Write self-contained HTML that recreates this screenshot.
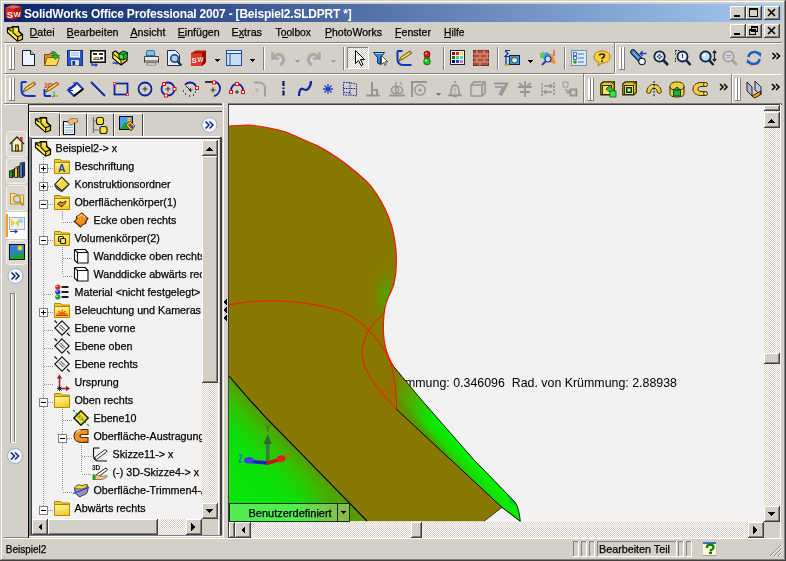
<!DOCTYPE html><html><head><meta charset="utf-8"><style>
html,body{margin:0;padding:0}
body{width:786px;height:561px;overflow:hidden;position:relative;background:#D4D0C8;font-family:"Liberation Sans",sans-serif}
svg text{font-family:"Liberation Sans",sans-serif}
svg{will-change:transform}
svg text[fill="#000"]{stroke:#000;stroke-width:0.25px}
</style></head><body>
<svg width="786" height="561" viewBox="0 0 786 561" shape-rendering="crispEdges" style="position:absolute;left:0;top:0">
<defs>
<pattern id="chk" width="2" height="2" patternUnits="userSpaceOnUse"><rect width="2" height="2" fill="#D4D0C8"/><rect width="1" height="1" fill="#fff"/><rect x="1" y="1" width="1" height="1" fill="#fff"/></pattern>
<linearGradient id="fg" x1="0" y1="0" x2="0.3" y2="1"><stop offset="0" stop-color="#FFF6A0"/><stop offset="1" stop-color="#F4CC30"/></linearGradient>
<linearGradient id="tb" x1="0" x2="1"><stop offset="0" stop-color="#0A246A"/><stop offset="1" stop-color="#A6CAF0"/></linearGradient>
<linearGradient id="gB" x1="0" y1="0" x2="1" y2="1"><stop offset="0" stop-color="#7CC000"/><stop offset="0.35" stop-color="#10D810"/><stop offset="1" stop-color="#20E020"/></linearGradient>
<linearGradient id="gC" gradientUnits="userSpaceOnUse" x1="395" y1="380" x2="520" y2="515"><stop offset="0" stop-color="#6A9A00"/><stop offset="0.25" stop-color="#20D020"/><stop offset="0.9" stop-color="#00E040"/><stop offset="1" stop-color="#10A070"/></linearGradient>
</defs>
<rect x="0" y="0" width="786" height="561" fill="#D4D0C8" />
<rect x="1" y="1" width="784" height="1" fill="#FFFFFF" />
<rect x="1" y="1" width="1" height="558" fill="#FFFFFF" />
<rect x="0" y="560" width="786" height="1" fill="#404040" />
<rect x="785" y="0" width="1" height="561" fill="#404040" />
<rect x="1" y="559" width="784" height="1" fill="#808080" />
<rect x="784" y="1" width="1" height="559" fill="#808080" />
<rect x="4" y="4" width="778" height="18" fill="url(#tb)" />
<g shape-rendering="auto"><path d="M5.5 7.5L12.5 5 21.5 6.5 14 9z" fill="#E86058"/><path d="M5.5 7.5L14 9 13.5 19.8 5.8 17.8z" fill="#E02418"/><path d="M14 9L21.5 6.5 21.2 16.8 13.5 19.8z" fill="#B01810"/></g>
<text x="6.8" y="17.5" font-size="9.5" fill="#fff" font-weight="bold" shape-rendering="auto">S</text>
<text x="13.6" y="17" font-size="8" fill="#F4E4E4" font-weight="bold" textLength="7.2" lengthAdjust="spacingAndGlyphs">W</text>
<text x="24" y="17.5" font-size="12" fill="#fff" font-weight="bold" letter-spacing="-0.2">SolidWorks Office Professional 2007 - [Beispiel2.SLDPRT *]</text>
<rect x="730" y="6" width="16" height="14" fill="#D4D0C8" />
<rect x="730" y="6" width="16" height="1" fill="#FFFFFF" />
<rect x="730" y="6" width="1" height="14" fill="#FFFFFF" />
<rect x="730" y="19" width="16" height="1" fill="#404040" />
<rect x="745" y="6" width="1" height="14" fill="#404040" />
<rect x="731" y="18" width="14" height="1" fill="#808080" />
<rect x="744" y="7" width="1" height="12" fill="#808080" />
<rect x="746" y="6" width="16" height="14" fill="#D4D0C8" />
<rect x="746" y="6" width="16" height="1" fill="#FFFFFF" />
<rect x="746" y="6" width="1" height="14" fill="#FFFFFF" />
<rect x="746" y="19" width="16" height="1" fill="#404040" />
<rect x="761" y="6" width="1" height="14" fill="#404040" />
<rect x="747" y="18" width="14" height="1" fill="#808080" />
<rect x="760" y="7" width="1" height="12" fill="#808080" />
<rect x="764" y="6" width="16" height="14" fill="#D4D0C8" />
<rect x="764" y="6" width="16" height="1" fill="#FFFFFF" />
<rect x="764" y="6" width="1" height="14" fill="#FFFFFF" />
<rect x="764" y="19" width="16" height="1" fill="#404040" />
<rect x="779" y="6" width="1" height="14" fill="#404040" />
<rect x="765" y="18" width="14" height="1" fill="#808080" />
<rect x="778" y="7" width="1" height="12" fill="#808080" />
<rect x="734" y="15" width="6" height="2" fill="#000" />
<path d="M749.5 8.5h8v8h-8z" fill="none" stroke="#000"/>
<rect x="749" y="8" width="9" height="2" fill="#000" />
<path d="M768 9l7 7M775 9l-7 7" stroke="#000" stroke-width="1.6" shape-rendering="auto"/>
<rect x="730" y="24" width="16" height="14" fill="#D4D0C8" />
<rect x="730" y="24" width="16" height="1" fill="#FFFFFF" />
<rect x="730" y="24" width="1" height="14" fill="#FFFFFF" />
<rect x="730" y="37" width="16" height="1" fill="#404040" />
<rect x="745" y="24" width="1" height="14" fill="#404040" />
<rect x="731" y="36" width="14" height="1" fill="#808080" />
<rect x="744" y="25" width="1" height="12" fill="#808080" />
<rect x="746" y="24" width="16" height="14" fill="#D4D0C8" />
<rect x="746" y="24" width="16" height="1" fill="#FFFFFF" />
<rect x="746" y="24" width="1" height="14" fill="#FFFFFF" />
<rect x="746" y="37" width="16" height="1" fill="#404040" />
<rect x="761" y="24" width="1" height="14" fill="#404040" />
<rect x="747" y="36" width="14" height="1" fill="#808080" />
<rect x="760" y="25" width="1" height="12" fill="#808080" />
<rect x="764" y="24" width="16" height="14" fill="#D4D0C8" />
<rect x="764" y="24" width="16" height="1" fill="#FFFFFF" />
<rect x="764" y="24" width="1" height="14" fill="#FFFFFF" />
<rect x="764" y="37" width="16" height="1" fill="#404040" />
<rect x="779" y="24" width="1" height="14" fill="#404040" />
<rect x="765" y="36" width="14" height="1" fill="#808080" />
<rect x="778" y="25" width="1" height="12" fill="#808080" />
<rect x="734" y="33" width="6" height="2" fill="#000" />
<path d="M751.5 26.5h6v5h-6z M749.5 29.5h6v5h-6z" fill="none" stroke="#000"/>
<rect x="751" y="26" width="7" height="2" fill="#000" />
<rect x="749" y="29" width="7" height="2" fill="#000" />
<path d="M768 27l7 7M775 27l-7 7" stroke="#000" stroke-width="1.6" shape-rendering="auto"/>
<text x="29.6" y="36" font-size="11" fill="#000" font-weight="normal" textLength="25" lengthAdjust="spacingAndGlyphs">Datei</text>
<rect x="30" y="37" width="8" height="1" fill="#000" />
<text x="66.6" y="36" font-size="11" fill="#000" font-weight="normal" textLength="52" lengthAdjust="spacingAndGlyphs">Bearbeiten</text>
<rect x="67" y="37" width="7" height="1" fill="#000" />
<text x="130.5" y="36" font-size="11" fill="#000" font-weight="normal" textLength="35" lengthAdjust="spacingAndGlyphs">Ansicht</text>
<rect x="130" y="37" width="7" height="1" fill="#000" />
<text x="177.7" y="36" font-size="11" fill="#000" font-weight="normal" textLength="42" lengthAdjust="spacingAndGlyphs">Einfügen</text>
<rect x="178" y="37" width="7" height="1" fill="#000" />
<text x="231.5" y="36" font-size="11" fill="#000" font-weight="normal" textLength="30.5" lengthAdjust="spacingAndGlyphs">Extras</text>
<rect x="239" y="37" width="5" height="1" fill="#000" />
<text x="275.5" y="36" font-size="11" fill="#000" font-weight="normal" textLength="35.5" lengthAdjust="spacingAndGlyphs">Toolbox</text>
<rect x="282" y="37" width="6" height="1" fill="#000" />
<text x="325" y="36" font-size="11" fill="#000" font-weight="normal" textLength="57" lengthAdjust="spacingAndGlyphs">PhotoWorks</text>
<rect x="325" y="37" width="7" height="1" fill="#000" />
<text x="395" y="36" font-size="11" fill="#000" font-weight="normal" textLength="36" lengthAdjust="spacingAndGlyphs">Fenster</text>
<rect x="395" y="37" width="6" height="1" fill="#000" />
<text x="444" y="36" font-size="11" fill="#000" font-weight="normal" textLength="20.5" lengthAdjust="spacingAndGlyphs">Hilfe</text>
<rect x="444" y="37" width="7" height="1" fill="#000" />
<rect x="4" y="42" width="778" height="1" fill="#808080" />
<rect x="4" y="43" width="778" height="1" fill="#FFFFFF" />
<rect x="4" y="73" width="610" height="1" fill="#808080" />
<rect x="4" y="74" width="778" height="1" fill="#FFFFFF" />
<rect x="614" y="43" width="1" height="30" fill="#808080" />
<rect x="615" y="43" width="1" height="30" fill="#FFFFFF" />
<rect x="583" y="74" width="1" height="29" fill="#808080" />
<rect x="584" y="74" width="1" height="29" fill="#FFFFFF" />
<rect x="731" y="74" width="1" height="29" fill="#808080" />
<rect x="732" y="74" width="1" height="29" fill="#FFFFFF" />
<rect x="9" y="47" width="2" height="23" fill="#FFFFFF" />
<rect x="11" y="47" width="1" height="23" fill="#808080" />
<rect x="9" y="69" width="3" height="1" fill="#808080" />
<rect x="12" y="47" width="2" height="23" fill="#FFFFFF" />
<rect x="14" y="47" width="1" height="23" fill="#808080" />
<rect x="12" y="69" width="3" height="1" fill="#808080" />
<rect x="9" y="78" width="2" height="23" fill="#FFFFFF" />
<rect x="11" y="78" width="1" height="23" fill="#808080" />
<rect x="9" y="100" width="3" height="1" fill="#808080" />
<rect x="12" y="78" width="2" height="23" fill="#FFFFFF" />
<rect x="14" y="78" width="1" height="23" fill="#808080" />
<rect x="12" y="100" width="3" height="1" fill="#808080" />
<rect x="619" y="47" width="2" height="23" fill="#FFFFFF" />
<rect x="621" y="47" width="1" height="23" fill="#808080" />
<rect x="619" y="69" width="3" height="1" fill="#808080" />
<rect x="622" y="47" width="2" height="23" fill="#FFFFFF" />
<rect x="624" y="47" width="1" height="23" fill="#808080" />
<rect x="622" y="69" width="3" height="1" fill="#808080" />
<rect x="588" y="78" width="2" height="23" fill="#FFFFFF" />
<rect x="590" y="78" width="1" height="23" fill="#808080" />
<rect x="588" y="100" width="3" height="1" fill="#808080" />
<rect x="591" y="78" width="2" height="23" fill="#FFFFFF" />
<rect x="593" y="78" width="1" height="23" fill="#808080" />
<rect x="591" y="100" width="3" height="1" fill="#808080" />
<rect x="735" y="78" width="2" height="23" fill="#FFFFFF" />
<rect x="737" y="78" width="1" height="23" fill="#808080" />
<rect x="735" y="100" width="3" height="1" fill="#808080" />
<rect x="738" y="78" width="2" height="23" fill="#FFFFFF" />
<rect x="740" y="78" width="1" height="23" fill="#808080" />
<rect x="738" y="100" width="3" height="1" fill="#808080" />
<rect x="5" y="44" width="1" height="29" fill="#FFFFFF" />
<rect x="5" y="75" width="1" height="28" fill="#FFFFFF" />
<rect x="4" y="103" width="23" height="435" fill="#D4D0C8" />
<rect x="4" y="103" width="778" height="1" fill="#808080" />
<rect x="4" y="104" width="24" height="1" fill="#FFFFFF" />
<rect x="28" y="104" width="194" height="1" fill="#404040" />
<rect x="228" y="104" width="554" height="1" fill="#404040" />
<rect x="28" y="104" width="1" height="434" fill="#000" />
<rect x="29" y="137" width="2" height="399" fill="#808080" />
<rect x="31" y="138" width="1" height="397" fill="#404040" />
<rect x="29" y="106" width="193" height="1" fill="#FFFFFF" />
<rect x="28" y="111" width="194" height="1" fill="#404040" />
<rect x="30" y="112" width="192" height="25" fill="#D4D0C8" />
<rect x="29" y="136" width="191" height="1" fill="#FFFFFF" />
<rect x="31" y="138" width="189" height="1" fill="#404040" />
<rect x="32" y="139" width="170" height="380" fill="#F2F2F2" />
<rect x="202" y="139" width="16" height="380" fill="url(#chk)" />
<rect x="202" y="140" width="16" height="16" fill="#D4D0C8" />
<rect x="202" y="140" width="16" height="1" fill="#FFFFFF" />
<rect x="202" y="140" width="1" height="16" fill="#FFFFFF" />
<rect x="202" y="155" width="16" height="1" fill="#404040" />
<rect x="217" y="140" width="1" height="16" fill="#404040" />
<rect x="203" y="154" width="14" height="1" fill="#808080" />
<rect x="216" y="141" width="1" height="14" fill="#808080" />
<rect x="202" y="156" width="16" height="227" fill="#D4D0C8" />
<rect x="202" y="156" width="16" height="1" fill="#FFFFFF" />
<rect x="202" y="156" width="1" height="227" fill="#FFFFFF" />
<rect x="202" y="382" width="16" height="1" fill="#404040" />
<rect x="217" y="156" width="1" height="227" fill="#404040" />
<rect x="203" y="381" width="14" height="1" fill="#808080" />
<rect x="216" y="157" width="1" height="225" fill="#808080" />
<rect x="202" y="503" width="16" height="16" fill="#D4D0C8" />
<rect x="202" y="503" width="16" height="1" fill="#FFFFFF" />
<rect x="202" y="503" width="1" height="16" fill="#FFFFFF" />
<rect x="202" y="518" width="16" height="1" fill="#404040" />
<rect x="217" y="503" width="1" height="16" fill="#404040" />
<rect x="203" y="517" width="14" height="1" fill="#808080" />
<rect x="216" y="504" width="1" height="14" fill="#808080" />
<path d="M205 151h8l-4-4z" fill="#000"/>
<path d="M205 509h8l-4 4z" fill="#000"/>
<rect x="32" y="519" width="170" height="16" fill="url(#chk)" />
<rect x="32" y="519" width="16" height="16" fill="#D4D0C8" />
<rect x="32" y="519" width="16" height="1" fill="#FFFFFF" />
<rect x="32" y="519" width="1" height="16" fill="#FFFFFF" />
<rect x="32" y="534" width="16" height="1" fill="#404040" />
<rect x="47" y="519" width="1" height="16" fill="#404040" />
<rect x="33" y="533" width="14" height="1" fill="#808080" />
<rect x="46" y="520" width="1" height="14" fill="#808080" />
<rect x="48" y="519" width="110" height="16" fill="#D4D0C8" />
<rect x="48" y="519" width="110" height="1" fill="#FFFFFF" />
<rect x="48" y="519" width="1" height="16" fill="#FFFFFF" />
<rect x="48" y="534" width="110" height="1" fill="#404040" />
<rect x="157" y="519" width="1" height="16" fill="#404040" />
<rect x="49" y="533" width="108" height="1" fill="#808080" />
<rect x="156" y="520" width="1" height="14" fill="#808080" />
<rect x="186" y="519" width="16" height="16" fill="#D4D0C8" />
<rect x="186" y="519" width="16" height="1" fill="#FFFFFF" />
<rect x="186" y="519" width="1" height="16" fill="#FFFFFF" />
<rect x="186" y="534" width="16" height="1" fill="#404040" />
<rect x="201" y="519" width="1" height="16" fill="#404040" />
<rect x="187" y="533" width="14" height="1" fill="#808080" />
<rect x="200" y="520" width="1" height="14" fill="#808080" />
<path d="M42 523v8l-4-4z" fill="#000"/><path d="M191 523v8l4-4z" fill="#000"/>
<rect x="202" y="519" width="16" height="16" fill="#D4D0C8" />
<rect x="218" y="139" width="1" height="397" fill="#FFFFFF" />
<rect x="220" y="137" width="2" height="400" fill="#404040" />
<rect x="29" y="535" width="193" height="1" fill="#808080" />
<rect x="29" y="536" width="193" height="1" fill="#FFFFFF" />
<rect x="222" y="103" width="6" height="435" fill="#D4D0C8" />
<rect x="223" y="103" width="1" height="435" fill="#FFFFFF" />
<path d="M227 299v6l-4-3z M227 307v6l-4-3z M227 315v6l-4-3z" fill="#000"/>
<rect x="228" y="104" width="1" height="434" fill="#404040" />
<rect x="229" y="105" width="535" height="417" fill="#F2F2F2" />
<g shape-rendering="auto">
<text x="385.7" y="387" font-size="12.4" textLength="291.3" lengthAdjust="spacingAndGlyphs" fill="#000000" font-family="Liberation Sans">Krümmung: 0.346096&#160; Rad. von Krümmung: 2.88938</text>
<path d="M229 126 L248 125 C262 126 275 129 286 132 L318 146 C330 152 338 158 346 164 C356 172 364 178 371 186 C380 198 385 207 389 218 C393 228 395 240 396 250 C397 262 396 275 394 284 C392 290 390 294 388 298 C385 305 384 312 383.6 320 C383 332 384 342 386 349 C388 356 390 361 393.6 366.4 L421.6 400 L473.5 459.4 L483.9 470 L514.9 502 C518 506 519.5 514 520.3 521.3 L502 507.4 L484 521.3 L229 521 Z" fill="#887700"/>
<defs><radialGradient id="gd" gradientUnits="userSpaceOnUse" cx="386" cy="296" r="30" gradientTransform="translate(386 296) scale(0.6 1.4) translate(-386 -296)"><stop offset="0" stop-color="#40B000" stop-opacity="0.9"/><stop offset="1" stop-color="#877A00" stop-opacity="0"/></radialGradient><radialGradient id="gl" gradientUnits="userSpaceOnUse" cx="390" cy="390" r="22"><stop offset="0" stop-color="#D04000" stop-opacity="0.3"/><stop offset="1" stop-color="#877A00" stop-opacity="0"/></radialGradient><linearGradient id="gB2" gradientUnits="userSpaceOnUse" x1="298" y1="448" x2="256" y2="488"><stop offset="0" stop-color="#5A9800"/><stop offset="0.3" stop-color="#30C400"/><stop offset="0.6" stop-color="#10DC08"/><stop offset="1" stop-color="#08E408"/></linearGradient><radialGradient id="gB3" gradientUnits="userSpaceOnUse" cx="350" cy="521" r="55"><stop offset="0" stop-color="#609400" stop-opacity="0.95"/><stop offset="0.5" stop-color="#50A000" stop-opacity="0.6"/><stop offset="1" stop-color="#40B000" stop-opacity="0"/></radialGradient><clipPath id="cd"><path d="M229 126 L248 125 C262 126 275 129 286 132 L318 146 C330 152 338 158 346 164 C356 172 364 178 371 186 C380 198 385 207 389 218 C393 228 395 240 396 250 C397 262 396 275 394 284 C392 290 390 294 388 298 C385 305 384 312 383.6 320 C383 332 384 342 386 349 C388 356 390 361 393.6 366.4 L421.6 400 L473.5 459.4 L483.9 470 L514.9 502 C518 506 519.5 514 520.3 521.3 L502 507.4 L484 521.3 L229 521 Z"/></clipPath></defs>
<path d="M360 250 L400 250 L400 330 L360 330Z" fill="url(#gd)" clip-path="url(#cd)"/>
<path d="M360 350 L400 350 L400 415 L360 415Z" fill="url(#gl)" clip-path="url(#cd)"/>
<path d="M229 376 L249.3 399.6 L268.2 420 L300 452.4 L367 521 L229 521 Z" fill="url(#gB2)"/>
<path d="M229 376 L249.3 399.6 L268.2 420 L300 452.4 L367 521 L229 521 Z" fill="url(#gB3)"/>
<defs><clipPath id="cs"><path d="M393.6 366.4 L421.6 400 L473.5 459.4 L483.9 470 L514.9 502 C518 506 519.5 514 520.3 521.3 L502 507.4 L395.7 408.5 C395.5 395 394.5 380 393.6 366.4Z"/></clipPath><linearGradient id="gS1" gradientUnits="userSpaceOnUse" x1="448.9" y1="460" x2="461" y2="449.2"><stop offset="0" stop-color="#4CA000"/><stop offset="0.45" stop-color="#18DC00"/><stop offset="1" stop-color="#08F000"/></linearGradient><linearGradient id="gS2" gradientUnits="userSpaceOnUse" x1="398" y1="375" x2="432" y2="420"><stop offset="0" stop-color="#887700" stop-opacity="0.95"/><stop offset="1" stop-color="#887700" stop-opacity="0"/></linearGradient><radialGradient id="gS3" gradientUnits="userSpaceOnUse" cx="518" cy="497" r="11"><stop offset="0" stop-color="#0050A0" stop-opacity="0.8"/><stop offset="1" stop-color="#0050A0" stop-opacity="0"/></radialGradient></defs>
<path d="M393.6 366.4 L421.6 400 L473.5 459.4 L483.9 470 L514.9 502 C518 506 519.5 514 520.3 521.3 L502 507.4 L395.7 408.5 C395.5 395 394.5 380 393.6 366.4Z" fill="url(#gS1)"/>
<path d="M393.6 366.4 L421.6 400 L473.5 459.4 L483.9 470 L514.9 502 C518 506 519.5 514 520.3 521.3 L502 507.4 L395.7 408.5 C395.5 395 394.5 380 393.6 366.4Z" fill="url(#gS2)"/>
<rect x="495" y="485" width="30" height="37" fill="url(#gS3)" clip-path="url(#cs)"/>
<path d="M229 376 L249.3 399.6 L268.2 420 L300 452.4 L367 521" stroke="#000" stroke-width="1.1" fill="none"/>
<path d="M395.7 408.5 L502 507.4 L520.3 521.3" stroke="#000" stroke-width="1" fill="none"/>
<path d="M393.6 366.4 L421.6 400 L473.5 459.4 L483.9 470 L514.9 502 C518 506 519.5 514 520.3 521.3" stroke="#101010" stroke-width="0.9" fill="none"/>
<path d="M502 507.4 L484 521.3" stroke="#302000" stroke-width="0.8" fill="none"/>
<path d="M229 126 L248 125 C262 126 275 129 286 132 L318 146 C330 152 338 158 346 164 C356 172 364 178 371 186 C380 198 385 207 389 218 C393 228 395 240 396 250 C397 262 396 275 394 284 C392 290 390 294 388 298 C385 305 384 312 383.6 320 C383 332 384 342 386 349 C388 356 390 361 393.6 366.4" stroke="#FF1000" stroke-width="1.1" fill="none"/>
<path d="M229 305 C250 300 300 297 343 312 C362 320 378 338 388 356 C394 370 397 392 396.5 409" stroke="#FF1000" stroke-width="1" fill="none"/>
<path d="M384.6 312.8 C372 324 363 335 362 352 C362 372 382 394 396.5 409" stroke="#FF1000" stroke-width="1" fill="none"/>
</g>
<g shape-rendering="auto">
<path d="M267.7 462 V443" stroke="#3A7A3A" stroke-width="3.6"/><path d="M263.5 444 L267.7 434.5 L272 444Z" fill="#2E6A2E"/>
<path d="M267.7 463 L251 461.5" stroke="#2020C0" stroke-width="3.6" stroke-linecap="round"/><ellipse cx="249" cy="460.3" rx="5" ry="3.3" fill="#4040F0"/>
<path d="M267.7 463 L278 460" stroke="#C01818" stroke-width="3.6" stroke-linecap="round"/><ellipse cx="281" cy="458.6" rx="4.5" ry="3.5" fill="#E02020" transform="rotate(-15 281 458.6)"/>
<path d="M265 424.5l2.7 3.5 2.7-3.5M267.7 428v4" stroke="#2E6A2E" stroke-width="0.9" fill="none"/>
<path d="M239 455h3l-3 7h3" stroke="#2050F0" stroke-width="1" fill="none"/>
<path d="M286 453l4 6M290 453l-4 6" stroke="#E05020" stroke-width="0.9" fill="none"/>
</g>
<rect x="229.5" y="503.5" width="108" height="18" fill="#fff" fill-opacity="0.3" stroke="#103010"/>
<rect x="337.5" y="503.5" width="12" height="18" fill="#fff" fill-opacity="0.3" stroke="#103010"/>
<text x="248.5" y="517" font-size="11" fill="#000" font-weight="normal" >Benutzerdefiniert</text>
<path d="M341 511h5l-2.5 3z" fill="#000"/>
<rect x="229" y="522" width="535" height="16" fill="url(#chk)" />
<rect x="229" y="522" width="6" height="16" fill="#D4D0C8" />
<rect x="229" y="522" width="6" height="1" fill="#FFFFFF" />
<rect x="229" y="522" width="1" height="16" fill="#FFFFFF" />
<rect x="229" y="537" width="6" height="1" fill="#404040" />
<rect x="234" y="522" width="1" height="16" fill="#404040" />
<rect x="230" y="536" width="4" height="1" fill="#808080" />
<rect x="233" y="523" width="1" height="14" fill="#808080" />
<rect x="235" y="522" width="16" height="16" fill="#D4D0C8" />
<rect x="235" y="522" width="16" height="1" fill="#FFFFFF" />
<rect x="235" y="522" width="1" height="16" fill="#FFFFFF" />
<rect x="235" y="537" width="16" height="1" fill="#404040" />
<rect x="250" y="522" width="1" height="16" fill="#404040" />
<rect x="236" y="536" width="14" height="1" fill="#808080" />
<rect x="249" y="523" width="1" height="14" fill="#808080" />
<rect x="411" y="522" width="11" height="16" fill="#D4D0C8" />
<rect x="411" y="522" width="11" height="1" fill="#FFFFFF" />
<rect x="411" y="522" width="1" height="16" fill="#FFFFFF" />
<rect x="411" y="537" width="11" height="1" fill="#404040" />
<rect x="421" y="522" width="1" height="16" fill="#404040" />
<rect x="412" y="536" width="9" height="1" fill="#808080" />
<rect x="420" y="523" width="1" height="14" fill="#808080" />
<rect x="748" y="522" width="16" height="16" fill="#D4D0C8" />
<rect x="748" y="522" width="16" height="1" fill="#FFFFFF" />
<rect x="748" y="522" width="1" height="16" fill="#FFFFFF" />
<rect x="748" y="537" width="16" height="1" fill="#404040" />
<rect x="763" y="522" width="1" height="16" fill="#404040" />
<rect x="749" y="536" width="14" height="1" fill="#808080" />
<rect x="762" y="523" width="1" height="14" fill="#808080" />
<path d="M245 526v8l-4-4z" fill="#000"/><path d="M753 526v8l4-4z" fill="#000"/>
<rect x="764" y="105" width="16" height="417" fill="url(#chk)" />
<rect x="764" y="105" width="16" height="6" fill="#D4D0C8" />
<rect x="764" y="105" width="16" height="1" fill="#FFFFFF" />
<rect x="764" y="105" width="1" height="6" fill="#FFFFFF" />
<rect x="764" y="110" width="16" height="1" fill="#404040" />
<rect x="779" y="105" width="1" height="6" fill="#404040" />
<rect x="765" y="109" width="14" height="1" fill="#808080" />
<rect x="778" y="106" width="1" height="4" fill="#808080" />
<rect x="764" y="112" width="16" height="16" fill="#D4D0C8" />
<rect x="764" y="112" width="16" height="1" fill="#FFFFFF" />
<rect x="764" y="112" width="1" height="16" fill="#FFFFFF" />
<rect x="764" y="127" width="16" height="1" fill="#404040" />
<rect x="779" y="112" width="1" height="16" fill="#404040" />
<rect x="765" y="126" width="14" height="1" fill="#808080" />
<rect x="778" y="113" width="1" height="14" fill="#808080" />
<rect x="764" y="353" width="16" height="11" fill="#D4D0C8" />
<rect x="764" y="353" width="16" height="1" fill="#FFFFFF" />
<rect x="764" y="353" width="1" height="11" fill="#FFFFFF" />
<rect x="764" y="363" width="16" height="1" fill="#404040" />
<rect x="779" y="353" width="1" height="11" fill="#404040" />
<rect x="765" y="362" width="14" height="1" fill="#808080" />
<rect x="778" y="354" width="1" height="9" fill="#808080" />
<rect x="764" y="506" width="16" height="16" fill="#D4D0C8" />
<rect x="764" y="506" width="16" height="1" fill="#FFFFFF" />
<rect x="764" y="506" width="1" height="16" fill="#FFFFFF" />
<rect x="764" y="521" width="16" height="1" fill="#404040" />
<rect x="779" y="506" width="1" height="16" fill="#404040" />
<rect x="765" y="520" width="14" height="1" fill="#808080" />
<rect x="778" y="507" width="1" height="14" fill="#808080" />
<path d="M767 123h8l-4-4z" fill="#000"/><path d="M767 512h8l-4 4z" fill="#000"/>
<rect x="764" y="522" width="16" height="16" fill="#D4D0C8" />
<rect x="780" y="104" width="1" height="434" fill="#FFFFFF" />
<rect x="4" y="537" width="24" height="1" fill="#808080" />
<rect x="4" y="538" width="778" height="1" fill="#FFFFFF" />
<text x="5.8" y="553" font-size="11" fill="#000" font-weight="normal" textLength="40.5" lengthAdjust="spacingAndGlyphs">Beispiel2</text>
<rect x="573" y="541" width="6" height="1" fill="#808080" />
<rect x="573" y="541" width="1" height="16" fill="#808080" />
<rect x="573" y="556" width="6" height="1" fill="#FFFFFF" />
<rect x="578" y="541" width="1" height="16" fill="#FFFFFF" />
<rect x="581" y="541" width="6" height="1" fill="#808080" />
<rect x="581" y="541" width="1" height="16" fill="#808080" />
<rect x="581" y="556" width="6" height="1" fill="#FFFFFF" />
<rect x="586" y="541" width="1" height="16" fill="#FFFFFF" />
<rect x="589" y="541" width="6" height="1" fill="#808080" />
<rect x="589" y="541" width="1" height="16" fill="#808080" />
<rect x="589" y="556" width="6" height="1" fill="#FFFFFF" />
<rect x="594" y="541" width="1" height="16" fill="#FFFFFF" />
<rect x="678" y="541" width="6" height="1" fill="#808080" />
<rect x="678" y="541" width="1" height="16" fill="#808080" />
<rect x="678" y="556" width="6" height="1" fill="#FFFFFF" />
<rect x="683" y="541" width="1" height="16" fill="#FFFFFF" />
<rect x="686" y="541" width="6" height="1" fill="#808080" />
<rect x="686" y="541" width="1" height="16" fill="#808080" />
<rect x="686" y="556" width="6" height="1" fill="#FFFFFF" />
<rect x="691" y="541" width="1" height="16" fill="#FFFFFF" />
<rect x="597" y="541" width="80" height="1" fill="#808080" />
<rect x="597" y="541" width="1" height="16" fill="#808080" />
<rect x="597" y="556" width="80" height="1" fill="#FFFFFF" />
<rect x="676" y="541" width="1" height="16" fill="#FFFFFF" />
<text x="599" y="553" font-size="11" fill="#000" font-weight="normal" textLength="71" lengthAdjust="spacingAndGlyphs">Bearbeiten Teil</text>
<rect x="703" y="544" width="13" height="12" fill="#FAFCD8" />
<rect x="703" y="542" width="13" height="2" fill="#4070B0" />
<rect x="716" y="543" width="1" height="13" fill="#C8C8C0" />
<rect x="703" y="555" width="14" height="1" fill="#A0A098" />
<path d="M706.8 548c0-2.2 1.6-3.3 3.4-3.3s3.4 1 3.4 2.8c0 1.8-2.2 2.2-2.9 3v1" stroke="#088008" stroke-width="2.2" fill="none" shape-rendering="auto"/>
<rect x="709" y="552" width="2.6" height="2" fill="#088008" />
<path d="M770 556l11-11M774 556l7-7M778 556l3-3" stroke="#808080" stroke-width="1" shape-rendering="auto"/>
<path d="M771 556l11-11M775 556l7-7M779 556l3-3" stroke="#fff" stroke-width="1" shape-rendering="auto"/>
<rect x="6.5" y="131.5" width="20" height="25" rx="3" fill="#DCD9D2" stroke="#F4F2EE" shape-rendering="auto"/>
<rect x="6.5" y="158.5" width="20" height="25" rx="3" fill="#DCD9D2" stroke="#F4F2EE" shape-rendering="auto"/>
<rect x="6.5" y="185.5" width="20" height="25" rx="3" fill="#DCD9D2" stroke="#F4F2EE" shape-rendering="auto"/>
<rect x="6" y="212" width="21" height="27" fill="#FFFFFF" />
<rect x="6" y="214" width="2" height="23" fill="#F0A028" />
<rect x="6.5" y="240.5" width="20" height="24" rx="3" fill="#DCD9D2" stroke="#F4F2EE" shape-rendering="auto"/>
<g shape-rendering="auto"><circle cx="15.5" cy="276" r="7.5" fill="#F0F4FF" stroke="#A0A8D0"/><path d="M11.5 272.5l3.5 3.5-3.5 3.5M15.5 272.5l3.5 3.5-3.5 3.5" stroke="#10287A" stroke-width="1.5" fill="none"/></g>
<g shape-rendering="auto"><circle cx="15" cy="456" r="7.5" fill="#F0F4FF" stroke="#A0A8D0"/><path d="M11 452.5l3.5 3.5-3.5 3.5M15 452.5l3.5 3.5-3.5 3.5" stroke="#10287A" stroke-width="1.5" fill="none"/></g>
<g shape-rendering="auto"><circle cx="209.5" cy="125" r="7.5" fill="#F0F4FF" stroke="#A0A8D0"/><path d="M205.5 121.5l3.5 3.5-3.5 3.5M209.5 121.5l3.5 3.5-3.5 3.5" stroke="#10287A" stroke-width="1.5" fill="none"/></g>
<rect x="10" y="293" width="1" height="150" fill="#808080" />
<rect x="11" y="293" width="1" height="150" fill="#FFFFFF" />
<rect x="14" y="293" width="1" height="150" fill="#808080" />
<rect x="15" y="293" width="1" height="150" fill="#FFFFFF" />
<rect x="10" y="293" width="5" height="1" fill="#808080" />
<rect x="11" y="442" width="5" height="1" fill="#FFFFFF" />
<svg x="30" y="139" width="172" height="379" overflow="hidden">
<g transform="translate(-30,-139)">
<path d="M43.5 157V508" stroke="#909090" stroke-dasharray="1 1" stroke-width="1"/>
<path d="M62.5 211V220M62.5 247V274M62.5 409V490M81.5 445V472" stroke="#909090" stroke-dasharray="1 1" stroke-width="1"/>
<text x="55.5" y="152" font-size="11" fill="#000" font-weight="normal" textLength="61.7" lengthAdjust="spacingAndGlyphs">Beispiel2-&gt; x</text>
<g transform="translate(35,140)" shape-rendering="auto"><path d="M0.6 3L4.7 2.6 5.7 1.6 11.4 1.7 11.8 6.4 15.5 9.6 15.3 14.4 10.5 16 0.6 7.4Z" fill="#F0D820" stroke="#000" stroke-width="1.4" stroke-linejoin="round"/><path d="M1.2 4.2L10.2 11.8V15.2L1.2 7z" fill="#FFF040"/><path d="M6.4 3h4.6v4.2l-4.4-1.2z" fill="#F8E848"/><path d="M11 12.2l3.8-2.2v4l-3.8 1.6z" fill="#E8C818"/><path d="M0.8 3.4L4.4 6.2M6 2.2V7.6M6 7.6L10.6 11.8M10.6 11.8L15.2 9.8M10.6 11.8V15.8" stroke="#000" stroke-width="1.1" fill="none"/></g>
<text x="74.5" y="170" font-size="11" fill="#000" font-weight="normal" textLength="59.7" lengthAdjust="spacingAndGlyphs">Beschriftung</text>
<path d="M44 168.5H54" stroke="#909090" stroke-dasharray="1 1" stroke-width="1"/>
<rect x="39.5" y="164.5" width="8" height="8" fill="#fff" stroke="#808080"/>
<rect x="41" y="168" width="5" height="1" fill="#000" />
<rect x="43" y="166" width="1" height="5" fill="#000" />
<g transform="translate(54,158)" shape-rendering="auto"><path d="M0.5 1.5h6l1.5 1.5h7.5v12.5h-15z" fill="#F0C830" stroke="#B08800"/><path d="M0.5 4.5h15v11h-15z" fill="url(#fg)" stroke="#B08800"/><text x="4.3" y="14" font-size="10" font-weight="bold" font-family="Liberation Serif" fill="#2040A0">A</text></g>
<text x="74.5" y="188" font-size="11" fill="#000" font-weight="normal" textLength="96.0" lengthAdjust="spacingAndGlyphs">Konstruktionsordner</text>
<path d="M44 186.5H54" stroke="#909090" stroke-dasharray="1 1" stroke-width="1"/>
<rect x="39.5" y="182.5" width="8" height="8" fill="#fff" stroke="#808080"/>
<rect x="41" y="186" width="5" height="1" fill="#000" />
<rect x="43" y="184" width="1" height="5" fill="#000" />
<g transform="translate(54,176)" shape-rendering="auto"><path d="M0.8 9.5l2 3.5 5 2.8 7.4-7.3-1.5-1z" fill="#707880" stroke="#202830" stroke-width="0.9"/><path d="M0.8 8.3L7.8 1.2 15 8.3 7.8 14.6z" fill="#F8D848" stroke="#302800" stroke-width="1.1" stroke-linejoin="round"/><path d="M3 8.3l4.8-4.8" stroke="#FFF4A0" stroke-width="1.2"/></g>
<text x="74.5" y="206" font-size="11" fill="#000" font-weight="normal" textLength="102.0" lengthAdjust="spacingAndGlyphs">Oberflächenkörper(1)</text>
<path d="M44 204.5H54" stroke="#909090" stroke-dasharray="1 1" stroke-width="1"/>
<rect x="39.5" y="200.5" width="8" height="8" fill="#fff" stroke="#808080"/>
<rect x="41" y="204" width="5" height="1" fill="#000" />
<g transform="translate(54,194)" shape-rendering="auto"><path d="M0.5 1.5h6l1.5 1.5h7.5v12.5h-15z" fill="#F0C830" stroke="#B08800"/><path d="M0.5 4.5h15v11h-15z" fill="url(#fg)" stroke="#B08800"/><path d="M3.5 10l3-2.5v1.3c2 0 4-.8 5.5-1.8-.3 2-1.5 4-4 4.5v1.5z" fill="#F08818" stroke="#402000" stroke-width="0.9" stroke-linejoin="round"/></g>
<text x="93.5" y="224" font-size="11" fill="#000" font-weight="normal" textLength="82.9" lengthAdjust="spacingAndGlyphs">Ecke oben rechts</text>
<path d="M63 222.5H73" stroke="#909090" stroke-dasharray="1 1" stroke-width="1"/>
<g transform="translate(73,212)" shape-rendering="auto"><path d="M1 9.5c2-1 3-3 2.5-5 2-.5 4-2 5-3.5 2 1 4 4 6.5 5.5-1.5 1.2-2.5 3-2.3 5-2 .3-4 1.5-5.2 3.5-2-2-4-4-6.5-5.5z" fill="#F09020" stroke="#402000" stroke-width="1.1" stroke-linejoin="round"/><path d="M4.5 5c1.5-.5 3-1.5 4-2.5 1.5 1 2.5 2 4 3" stroke="#FFD070" stroke-width="1.3" fill="none"/></g>
<text x="74.5" y="242" font-size="11" fill="#000" font-weight="normal" textLength="85.3" lengthAdjust="spacingAndGlyphs">Volumenkörper(2)</text>
<path d="M44 240.5H54" stroke="#909090" stroke-dasharray="1 1" stroke-width="1"/>
<rect x="39.5" y="236.5" width="8" height="8" fill="#fff" stroke="#808080"/>
<rect x="41" y="240" width="5" height="1" fill="#000" />
<g transform="translate(54,230)" shape-rendering="auto"><path d="M0.5 1.5h6l1.5 1.5h7.5v12.5h-15z" fill="#F0C830" stroke="#B08800"/><path d="M0.5 4.5h15v11h-15z" fill="url(#fg)" stroke="#B08800"/><rect x="4.5" y="6.5" width="5" height="5" rx="1" fill="none" stroke="#202000" stroke-width="1.1"/><rect x="6.5" y="8.5" width="5" height="5" rx="1" fill="#F8E070" stroke="#202000" stroke-width="1.1"/></g>
<text x="93.5" y="260" font-size="11" fill="#000" font-weight="normal" textLength="111.8" lengthAdjust="spacingAndGlyphs">Wanddicke oben rechts</text>
<path d="M63 258.5H73" stroke="#909090" stroke-dasharray="1 1" stroke-width="1"/>
<g transform="translate(73,248)" shape-rendering="auto"><path d="M1.5 1.5h10.5l3 3v10.5h-10.5l-3-3z" fill="#fff" stroke="#101010" stroke-width="1.1" stroke-linejoin="round"/><path d="M4.5 4.5h10.5M4.5 4.5v10.5M1.5 1.5l3 3" stroke="#101010" stroke-width="1.1" fill="none"/></g>
<text x="93.5" y="278" font-size="11" fill="#000" font-weight="normal" textLength="125.4" lengthAdjust="spacingAndGlyphs">Wanddicke abwärts rechts</text>
<path d="M63 276.5H73" stroke="#909090" stroke-dasharray="1 1" stroke-width="1"/>
<g transform="translate(73,266)" shape-rendering="auto"><path d="M1.5 1.5h10.5l3 3v10.5h-10.5l-3-3z" fill="#fff" stroke="#101010" stroke-width="1.1" stroke-linejoin="round"/><path d="M4.5 4.5h10.5M4.5 4.5v10.5M1.5 1.5l3 3" stroke="#101010" stroke-width="1.1" fill="none"/></g>
<text x="74.5" y="296" font-size="11" fill="#000" font-weight="normal" textLength="125.9" lengthAdjust="spacingAndGlyphs">Material &lt;nicht festgelegt&gt;</text>
<path d="M44 294.5H54" stroke="#909090" stroke-dasharray="1 1" stroke-width="1"/>
<g transform="translate(54,284)" shape-rendering="auto"><circle cx="3.8" cy="3" r="2.6" fill="#E02020"/><circle cx="3.8" cy="8" r="2.6" fill="#2838E0"/><circle cx="3.8" cy="13" r="2.6" fill="#18A028"/><circle cx="3" cy="2.2" r="0.9" fill="#FFB0B0"/><circle cx="3" cy="7.2" r="0.9" fill="#B0C0FF"/><circle cx="3" cy="12.2" r="0.9" fill="#B0FFB0"/><path d="M7.5 3h7M7.5 8h7M7.5 13h7" stroke="#202020" stroke-width="2.2"/></g>
<text x="74.5" y="314" font-size="11" fill="#000" font-weight="normal" textLength="126.5" lengthAdjust="spacingAndGlyphs">Beleuchtung und Kameras</text>
<path d="M44 312.5H54" stroke="#909090" stroke-dasharray="1 1" stroke-width="1"/>
<rect x="39.5" y="308.5" width="8" height="8" fill="#fff" stroke="#808080"/>
<rect x="41" y="312" width="5" height="1" fill="#000" />
<rect x="43" y="310" width="1" height="5" fill="#000" />
<g transform="translate(54,302)" shape-rendering="auto"><path d="M0.5 1.5h6l1.5 1.5h7.5v12.5h-15z" fill="#F0C830" stroke="#B08800"/><path d="M0.5 4.5h15v11h-15z" fill="url(#fg)" stroke="#B08800"/><path d="M3.5 13.5a4.5 4 0 0 1 9 0z" fill="#F06810"/><path d="M8 7.5v1.5M4.5 9l1 1M11.5 9l-1 1M2.5 12h1.5M12 12h1.5" stroke="#E04800" stroke-width="1.1"/><path d="M2 13.5h12" stroke="#C04000"/></g>
<text x="74.5" y="332" font-size="11" fill="#000" font-weight="normal" textLength="60.9" lengthAdjust="spacingAndGlyphs">Ebene vorne</text>
<path d="M44 330.5H54" stroke="#909090" stroke-dasharray="1 1" stroke-width="1"/>
<g transform="translate(54,320)" shape-rendering="auto"><path d="M8 0.8L15.2 8 8 15.2 0.8 8z" fill="none" stroke="#101010" stroke-width="1.1"/><path d="M5 6.5l4.5 4.5M6.5 5l4.5 4.5" stroke="#101010" stroke-width="0.9"/><path d="M0.5 0.5l2.5 2.5M13 13l2.8 2.8" stroke="#101010" stroke-width="1.1"/></g>
<text x="74.5" y="350" font-size="11" fill="#000" font-weight="normal" textLength="57.9" lengthAdjust="spacingAndGlyphs">Ebene oben</text>
<path d="M44 348.5H54" stroke="#909090" stroke-dasharray="1 1" stroke-width="1"/>
<g transform="translate(54,338)" shape-rendering="auto"><path d="M8 0.8L15.2 8 8 15.2 0.8 8z" fill="none" stroke="#101010" stroke-width="1.1"/><path d="M5 6.5l4.5 4.5M6.5 5l4.5 4.5" stroke="#101010" stroke-width="0.9"/><path d="M0.5 0.5l2.5 2.5M13 13l2.8 2.8" stroke="#101010" stroke-width="1.1"/></g>
<text x="74.5" y="368" font-size="11" fill="#000" font-weight="normal" textLength="63.3" lengthAdjust="spacingAndGlyphs">Ebene rechts</text>
<path d="M44 366.5H54" stroke="#909090" stroke-dasharray="1 1" stroke-width="1"/>
<g transform="translate(54,356)" shape-rendering="auto"><path d="M8 0.8L15.2 8 8 15.2 0.8 8z" fill="none" stroke="#101010" stroke-width="1.1"/><path d="M5 6.5l4.5 4.5M6.5 5l4.5 4.5" stroke="#101010" stroke-width="0.9"/><path d="M0.5 0.5l2.5 2.5M13 13l2.8 2.8" stroke="#101010" stroke-width="1.1"/></g>
<text x="74.5" y="386" font-size="11" fill="#000" font-weight="normal" textLength="44.1" lengthAdjust="spacingAndGlyphs">Ursprung</text>
<path d="M44 384.5H54" stroke="#909090" stroke-dasharray="1 1" stroke-width="1"/>
<g transform="translate(54,374)" shape-rendering="auto"><path d="M5.5 14.5V3M5.5 14.5H13" stroke="#A01828" stroke-width="1.5"/><path d="M2.8 4.5L5.5 0.5 8.2 4.5z M12 11.8l4 2.7-4 2.7z" fill="#A01828"/><path d="M3.5 12.5l4 4M7.5 12.5l-4 4M5.5 12v5M3 14.5h5" stroke="#202020" stroke-width="0.9"/></g>
<text x="74.5" y="404" font-size="11" fill="#000" font-weight="normal" textLength="58.5" lengthAdjust="spacingAndGlyphs">Oben rechts</text>
<path d="M44 402.5H54" stroke="#909090" stroke-dasharray="1 1" stroke-width="1"/>
<rect x="39.5" y="398.5" width="8" height="8" fill="#fff" stroke="#808080"/>
<rect x="41" y="402" width="5" height="1" fill="#000" />
<g transform="translate(54,392)" shape-rendering="auto"><path d="M0.5 1.5h6l1.5 1.5h7.5v12.5h-15z" fill="#F0C830" stroke="#B08800"/><path d="M0.5 4.5h15v11h-15z" fill="url(#fg)" stroke="#B08800"/></g>
<text x="93.5" y="422" font-size="11" fill="#000" font-weight="normal" textLength="43.0" lengthAdjust="spacingAndGlyphs">Ebene10</text>
<path d="M63 420.5H73" stroke="#909090" stroke-dasharray="1 1" stroke-width="1"/>
<g transform="translate(73,410)" shape-rendering="auto"><path d="M8 0.8L15.2 8 8 15.2 0.8 8z" fill="#F0E040" stroke="#202000" stroke-width="1.1"/><path d="M3.5 5.5l5 5M5.5 3.5l5 5" stroke="#A0A000" stroke-width="0.9"/><path d="M0 0l16 16" stroke="#20A030" stroke-width="1.2" stroke-dasharray="2.5 1.5"/><path d="M8 0.8L15.2 8 8 15.2 0.8 8z" fill="none" stroke="#202000" stroke-width="1.1"/></g>
<text x="93.5" y="440" font-size="11" fill="#000" font-weight="normal" textLength="111.0" lengthAdjust="spacingAndGlyphs">Oberfläche-Austragung</text>
<path d="M63 438.5H73" stroke="#909090" stroke-dasharray="1 1" stroke-width="1"/>
<rect x="58.5" y="434.5" width="8" height="8" fill="#fff" stroke="#808080"/>
<rect x="60" y="438" width="5" height="1" fill="#000" />
<g transform="translate(73,428)" shape-rendering="auto"><path d="M9.5 1.5h5.5v5h-5.5c-1.5 0-2.5.7-2.5 1.5s1 1.5 2.5 1.5h5.5v5h-5.5c-5 0-8.5-2.5-8.5-6.5s3.5-6.5 8.5-6.5z" fill="#F09030" stroke="#503000" stroke-width="1.1" stroke-linejoin="round"/><path d="M3.5 5c.5-1.5 2-2.5 4-2.8" stroke="#FFD8A0" stroke-width="1.3" fill="none"/><path d="M10 13.5h4" stroke="#C06010" stroke-width="1.2"/></g>
<text x="112.5" y="458" font-size="11" fill="#000" font-weight="normal" textLength="60.9" lengthAdjust="spacingAndGlyphs">Skizze11-&gt; x</text>
<path d="M82 456.5H92" stroke="#909090" stroke-dasharray="1 1" stroke-width="1"/>
<g transform="translate(92,446)" shape-rendering="auto"><path d="M1.5 2V10c0 3 2 5 5 5h8.5" stroke="#101010" stroke-width="1.1" fill="none"/><path d="M1.5 2h6" stroke="#101010" stroke-width="1.1"/><path d="M2.5 11.5l10-7.5c1.5-1 3.2.8 2 2l-10 7.5z" fill="#fff" stroke="#101010" stroke-width="0.9"/><path d="M2.5 11.5l1 1.5" stroke="#101010"/></g>
<text x="112.5" y="476" font-size="11" fill="#000" font-weight="normal" textLength="86.7" lengthAdjust="spacingAndGlyphs">(-) 3D-Skizze4-&gt; x</text>
<path d="M82 474.5H92" stroke="#909090" stroke-dasharray="1 1" stroke-width="1"/>
<g transform="translate(92,464)" shape-rendering="auto"><text x="0" y="6.3" font-size="6.5" font-weight="bold" fill="#101010">3D</text><path d="M4 11l9-6.5c1.5-1 3 .8 1.8 2l-9 6.5" fill="#fff" stroke="#101010" stroke-width="0.9"/><path d="M2 11.5c2-.5 4 0 6 .5 2 .5 5 0 7-.5 0 2.5-3 4-7 4h-6z" fill="#F0C890" stroke="#806040" stroke-width="0.8"/><rect x="0.5" y="10.5" width="3" height="5.5" fill="#20A030"/></g>
<text x="93.5" y="494" font-size="11" fill="#000" font-weight="normal" textLength="162.4" lengthAdjust="spacingAndGlyphs">Oberfläche-Trimmen4-Austragung</text>
<path d="M63 492.5H73" stroke="#909090" stroke-dasharray="1 1" stroke-width="1"/>
<g transform="translate(73,482)" shape-rendering="auto"><path d="M1.5 6c2-3 4.5-3.5 6.5-2.5s4.5-2 6.5-.5c1 3 .5 7-1.5 9-2 1-4.5 1.5-6 3-2-1-4-2.5-5-5z" fill="#9890C0" stroke="#302850" stroke-width="0.9"/><path d="M1.5 6c2-3 4.5-3.5 6.5-2.5s4.5-2 6.5-.5c-.5 2-2 3-4 3.5-3 .8-6 .3-9-.5z" fill="#F0D840" stroke="#504000" stroke-width="0.6"/><path d="M0 11.5l16-6" stroke="#2838C8" stroke-width="1.3"/></g>
<text x="74.5" y="512" font-size="11" fill="#000" font-weight="normal" textLength="71.0" lengthAdjust="spacingAndGlyphs">Abwärts rechts</text>
<path d="M44 510.5H54" stroke="#909090" stroke-dasharray="1 1" stroke-width="1"/>
<rect x="39.5" y="506.5" width="8" height="8" fill="#fff" stroke="#808080"/>
<rect x="41" y="510" width="5" height="1" fill="#000" />
<g transform="translate(54,500)" shape-rendering="auto"><path d="M0.5 1.5h6l1.5 1.5h7.5v12.5h-15z" fill="#F0C830" stroke="#B08800"/><path d="M0.5 4.5h15v11h-15z" fill="url(#fg)" stroke="#B08800"/></g>
</g></svg>
<g transform="translate(22,50)" shape-rendering="auto"><path d="M0.5 0.5h8l4 4v11h-12z" fill="#EEF4FF" stroke="#101828"/><path d="M8.5 0.5v4h4" fill="#C8D4E8" stroke="#101828"/></g>
<g transform="translate(44,50)" shape-rendering="auto"><path d="M0.5 4.5h5l1-1.5h5v12h-11z" fill="#D89820" stroke="#705008"/><path d="M0.5 15.5l2.5-8h12.5l-3 8z" fill="#FFD850" stroke="#806010"/><path d="M8 1.5c3 0 5 1.5 5 4h2.5l-4 4-4-4h2.5c0-1.5-1-2-2-2z" fill="#30B030" stroke="#107010" stroke-width="0.7"/></g>
<g transform="translate(67,50)" shape-rendering="auto"><rect x="0.5" y="0.5" width="15" height="15" fill="#2858C8" stroke="#10307A"/><rect x="3" y="1" width="10" height="6.5" fill="#F8FAFF"/><path d="M4 3h8M4 5.2h8" stroke="#7090D0" stroke-width="0.8"/><rect x="4" y="10" width="8" height="5.5" fill="#D0D8E8"/><rect x="5.5" y="11" width="2.5" height="4" fill="#10307A"/></g>
<g transform="translate(90,50)" shape-rendering="auto"><rect x="0.8" y="0.8" width="14.4" height="11.4" fill="#fff" stroke="#101010" stroke-width="1.6"/><rect x="3" y="3" width="4" height="2" fill="#303030"/><rect x="9" y="3" width="4" height="2" fill="#303030"/><path d="M3.5 9.5c.5-2 2-2.5 3-2 1-.5 2.5 0 3 2z" fill="#F0C850" stroke="#604000" stroke-width="0.8"/><rect x="10" y="7" width="3" height="2.5" fill="#303030"/><path d="M2 12.5v2.5h4" stroke="#2040C0" stroke-width="1.4" fill="none"/><path d="M5.5 13l2.5 2-2.5 2z" fill="#2040C0"/></g>
<g transform="translate(112,50)" shape-rendering="auto"><path d="M0.8 2.5L3.5 1 9 5.5v4l6-3.5v4.5l-6 4.5-8.2-7z" fill="#F0D820" stroke="#000" stroke-width="1.2" stroke-linejoin="round"/><path d="M1.5 4l7.5 6.5v4" stroke="#000" stroke-width="1" fill="none"/><path d="M1.8 5.5l6.5 5.5v2.5l-6.5-5.5z" fill="#FFF050"/><path d="M7 3.5l4-2.5 4.5 1.5v5l-4 2.5-4.5-1.5z" fill="#20B040" stroke="#003000" stroke-width="1"/><path d="M7 3.5l4.5 1.5 4-2.5M11.5 5v5" stroke="#003000" stroke-width="0.8" fill="none"/><path d="M8 4.5l3 1v3.5l-3-1z" fill="#40E060"/><path d="M0.5 13h4.5" stroke="#2040C0" stroke-width="1.5"/><path d="M4.5 11l3 2-3 2z" fill="#2040C0"/></g>
<g transform="translate(144,50)" shape-rendering="auto"><path d="M3 0.5h7l1 5h-9z" fill="#80C0F0" stroke="#3070A0"/><path d="M0.5 6.5h14v6h-14z" fill="#E8E8E8" stroke="#404040"/><rect x="1" y="10" width="13" height="3" fill="#909090"/><path d="M3 13h9v2h-9z" fill="#fff" stroke="#404040" stroke-width="0.6"/></g>
<g transform="translate(167,50)" shape-rendering="auto"><path d="M0.5 0.5h8l4 4v11h-12z" fill="#E4EEFA" stroke="#203050"/><circle cx="7.5" cy="8.5" r="3.8" fill="#A8D0F0" stroke="#204070" stroke-width="1.5"/><path d="M10.5 11.5l4 4" stroke="#102040" stroke-width="2"/></g>
<g transform="translate(190,50)" shape-rendering="auto"><path d="M1 3l5-2.5h10v12l-4 3.5h-11z" fill="#B01810"/><path d="M1 3.5h11v12.5h-11z" fill="#E03828"/><path d="M12 3.5l4-3v12l-4 3.5z" fill="#901008"/><text x="1.6" y="12.5" font-size="8" font-weight="bold" fill="#fff">S</text><text x="7.2" y="12" font-size="6.5" font-weight="bold" fill="#F0D8D0">W</text></g>
<path d="M215 59h5l-2.5 3z" fill="#000"/>
<g transform="translate(226,50)" shape-rendering="auto"><rect x="0.5" y="0.5" width="15" height="15" fill="#C8DCF8" stroke="#2050A0"/><rect x="1" y="1" width="14" height="2.5" fill="#E8F0FF"/><path d="M1 3.5h14M4 3.5v12" stroke="#2050A0"/></g>
<path d="M250 59h5l-2.5 3z" fill="#000"/>
<rect x="263" y="47" width="1" height="23" fill="#808080" />
<rect x="264" y="47" width="1" height="23" fill="#FFFFFF" />
<g transform="translate(270,50)" shape-rendering="auto"><path d="M2.5 2v6.5h6.5" stroke="#A8A8A8" stroke-width="2.5" fill="none"/><path d="M3 8c2-4 8-5 10-1s-1 7-3 8" stroke="#A8A8A8" stroke-width="3" fill="none"/></g>
<path d="M295 60h5l-2.5 3z" fill="#A0A0A0"/>
<g transform="translate(306,50)" shape-rendering="auto"><path d="M13.5 2v6.5h-6.5" stroke="#A8A8A8" stroke-width="2.5" fill="none"/><path d="M13 8c-2-4-8-5-10-1s1 7 3 8" stroke="#A8A8A8" stroke-width="3" fill="none"/></g>
<path d="M331 60h5l-2.5 3z" fill="#A0A0A0"/>
<rect x="343" y="47" width="1" height="23" fill="#808080" />
<rect x="344" y="47" width="1" height="23" fill="#FFFFFF" />
<rect x="347" y="47" width="22" height="22" fill="url(#chk)" />
<rect x="347" y="47" width="22" height="1" fill="#808080" />
<rect x="347" y="47" width="1" height="22" fill="#808080" />
<rect x="347" y="68" width="22" height="1" fill="#FFFFFF" />
<rect x="368" y="47" width="1" height="22" fill="#FFFFFF" />
<g transform="translate(355,50)" shape-rendering="auto"><path d="M0.5 0.5v13l3-3 2.5 5 2-1-2.5-5h4z" fill="#fff" stroke="#000"/></g>
<g transform="translate(373,50)" shape-rendering="auto"><path d="M0.5 2.5h11l-4 5v7l-3-1.5v-5.5z" fill="#2A8AD8" stroke="#0A2A60"/><path d="M2 3.5h8" stroke="#A0D8FF"/><path d="M8.5 5.5v9l2-2 1.5 3 1.3-.7-1.5-3h3z" fill="#fff" stroke="#303030" stroke-width="0.8"/></g>
<g transform="translate(396,50)" shape-rendering="auto"><path d="M1.5 1v8c0 4 2 6 6 6h8" stroke="#1030C0" stroke-width="2" fill="none"/><path d="M1.5 1h5" stroke="#1030C0" stroke-width="2"/><path d="M3 11l2-4 9-6 2 2-9 6z" fill="#F8D838" stroke="#403000" stroke-width="0.8"/><path d="M13.5 1.2l2 2" stroke="#E06060" stroke-width="2"/></g>
<g transform="translate(422,50)" shape-rendering="auto"><rect x="2" y="1" width="6" height="14" rx="3" fill="#707070"/><circle cx="5" cy="4.2" r="3.1" fill="#D82020" stroke="#600000" stroke-width="0.6"/><circle cx="5" cy="11.5" r="3.4" fill="#20C020" stroke="#005000" stroke-width="0.6"/><circle cx="4" cy="10.5" r="1.1" fill="#C0FFC0"/><circle cx="4" cy="3.3" r="0.9" fill="#FFB0B0"/></g>
<rect x="443" y="47" width="1" height="23" fill="#808080" />
<rect x="444" y="47" width="1" height="23" fill="#FFFFFF" />
<g transform="translate(450,50)" shape-rendering="auto"><rect x="0.5" y="0.5" width="14" height="14" fill="#F8F8F8" stroke="#202020"/><rect x="2" y="2" width="3" height="3" fill="#A00000"/><rect x="6" y="2" width="3" height="3" fill="#E02020"/><rect x="10" y="2" width="3" height="3" fill="#F0E040"/><rect x="2" y="6" width="3" height="3" fill="#008000"/><rect x="6" y="6" width="3" height="3" fill="#40E040"/><rect x="10" y="6" width="3" height="3" fill="#40E0E0"/><rect x="2" y="10" width="3" height="3" fill="#000090"/><rect x="6" y="10" width="3" height="3" fill="#2040F0"/><rect x="10" y="10" width="3" height="3" fill="#E060E0"/></g>
<g transform="translate(473,50)" shape-rendering="auto"><rect x="0.5" y="0.5" width="15" height="15" fill="#B05040" stroke="#703020"/><path d="M0 4h16M0 8h16M0 12h16M4 0v4M11 0v4M7 4v4M14 4v4M4 8v4M11 8v4M7 12v4" stroke="#E8A090" stroke-width="0.9"/></g>
<rect x="497" y="47" width="1" height="23" fill="#808080" />
<rect x="498" y="47" width="1" height="23" fill="#FFFFFF" />
<g transform="translate(504,50)" shape-rendering="auto"><path d="M1 0.5h5M1 0.5l3 3-3 3h5" stroke="#1030A0" stroke-width="1.2" fill="none"/><rect x="5.5" y="5.5" width="10" height="9" fill="#30A0E0" stroke="#002060"/><circle cx="10.5" cy="10" r="3" fill="#F0F0F0" stroke="#404040"/><path d="M9 9l3-1" stroke="#C09000"/><path d="M0.5 15h5M2 7v7" stroke="#1030A0" stroke-width="1.2"/><path d="M0 15.3h6" stroke="#F0D000" stroke-width="1"/></g>
<path d="M528 60h5l-2.5 3z" fill="#000"/>
<g transform="translate(540,50)" shape-rendering="auto"><path d="M5 2l8 3 3 9-8-2z" fill="#F09020"/><path d="M5 2l5 2-2 8-5-3z" fill="#30A0E0"/><path d="M3 2v6M1 3v5" stroke="#20C020" stroke-width="1.2"/><circle cx="8" cy="9" r="3" fill="#C0E0FF" stroke="#2040A0" stroke-width="1.2"/><path d="M6 11l-4 4" stroke="#2040A0" stroke-width="2"/><path d="M14 0v6" stroke="#E02020"/></g>
<rect x="564" y="47" width="1" height="23" fill="#808080" />
<rect x="565" y="47" width="1" height="23" fill="#FFFFFF" />
<g transform="translate(571,50)" shape-rendering="auto"><rect x="0.5" y="0.5" width="15" height="15" fill="#D8ECFF" stroke="#7090B0"/><rect x="2.5" y="2.5" width="3" height="3" fill="none" stroke="#3050A0" stroke-width="0.8"/><rect x="2.5" y="6.5" width="3" height="3" fill="none" stroke="#3050A0" stroke-width="0.8"/><circle cx="4" cy="12" r="1.8" fill="#20A020"/><path d="M7 4h6M7 8h6M7 12h6" stroke="#3050A0" stroke-width="0.8"/></g>
<g transform="translate(593,50)" shape-rendering="auto"><path d="M9 1c5 0 8 2.5 8 6s-3 6-8 6l-4 3 1-3.5c-3-1-5-3-5-5.5 0-3.5 3-6 8-6z" fill="#F8D040" stroke="#B08000"/><path d="M6.5 5.5c0-2 5-2 5 0s-2.5 2-2.5 3.5" stroke="#402000" stroke-width="1.6" fill="none"/><circle cx="9" cy="11" r="1" fill="#402000"/></g>
<g transform="translate(631,50)" shape-rendering="auto"><path d="M2 2l8 8.5" stroke="#101828" stroke-width="5.5" stroke-linecap="round"/><path d="M2 2l8 8.5" stroke="#3A88D8" stroke-width="3.6" stroke-linecap="round"/><path d="M2.5 2.5l5 5.3" stroke="#A0D0FF" stroke-width="1"/><circle cx="11" cy="11.5" r="3.2" fill="#E8F4FF" stroke="#101828" stroke-width="1.1"/><path d="M9.5 3.5h6M11.5 1.3l-2.2 2.2 2.2 2.2" stroke="#2040C0" stroke-width="1.5" fill="none"/></g>
<g transform="translate(653,50)" shape-rendering="auto"><circle cx="6.5" cy="6.5" r="5.2" fill="#E0F0FF" stroke="#102040" stroke-width="1.8"/><path d="M10.5 10.5l4.5 4.5" stroke="#102040" stroke-width="2.5"/><path d="M6.5 3.5l1.5 2h-3zM6.5 9.5l1.5-2h-3zM3.5 6.5l2-1.5v3zM9.5 6.5l-2-1.5v3z" fill="#303030"/></g>
<g transform="translate(675,50)" shape-rendering="auto"><path d="M0.5 0.5h4M0.5 0.5v4M0.5 8v4" stroke="#202020" stroke-dasharray="1.5 1"/><circle cx="7.5" cy="6.5" r="5" fill="#E0F0FF" stroke="#102040" stroke-width="1.8"/><path d="M11.5 10.5l4 4.5" stroke="#102040" stroke-width="2.5"/><path d="M7.5 4v4" stroke="#303030"/></g>
<g transform="translate(699,50)" shape-rendering="auto"><circle cx="6.5" cy="6.5" r="5.2" fill="#B8E0FF" stroke="#102040" stroke-width="1.8"/><circle cx="5" cy="5" r="1.5" fill="#fff"/><path d="M10.5 10.5l4 4.5" stroke="#102040" stroke-width="2.5"/><path d="M15.5 1v10M13.8 3l1.7-2 1.7 2M13.8 9l1.7 2 1.7-2" stroke="#202020" stroke-width="1.2" fill="none"/></g>
<g transform="translate(722,50)" shape-rendering="auto"><circle cx="6.5" cy="6.5" r="5.2" fill="#D8D8D8" stroke="#A0A0A0" stroke-width="1.8"/><path d="M10.5 10.5l4.5 4.5" stroke="#A0A0A0" stroke-width="2.5"/><path d="M4 5.5h5M4 7.5h5" stroke="#A0A0A0"/></g>
<g transform="translate(746,50)" shape-rendering="auto"><path d="M2.5 7a6 5.5 0 0 1 11-2.5" stroke="#2060C0" stroke-width="2.6" fill="none"/><path d="M11 2l4.5 1-1 4.5z" fill="#2060C0"/><path d="M13.5 9a6 5.5 0 0 1-11 2.5" stroke="#2060C0" stroke-width="2.6" fill="none"/><path d="M5 14l-4.5-1 1-4.5z" fill="#2060C0"/></g>
<path d="M772.5 53l3 3-3 3M776.5 53l3 3-3 3" stroke="#000" stroke-width="1.5" fill="none" shape-rendering="auto"/>
<g transform="translate(20,81)" shape-rendering="auto"><path d="M1.5 1v8c0 4 2 6 6 6h8" stroke="#1030C0" stroke-width="2" fill="none"/><path d="M1.5 1h5" stroke="#1030C0" stroke-width="2"/><path d="M3 11l2-4 9-6 2 2-9 6z" fill="#F8D838" stroke="#403000" stroke-width="0.8"/><path d="M13.5 1.2l2 2" stroke="#E06060" stroke-width="2"/></g>
<g transform="translate(43,81)" shape-rendering="auto"><text x="1" y="6.5" font-size="7" font-weight="bold" fill="#E04010">3D</text><path d="M1.5 8v5.5c0 1 .5 1.5 1.5 1.5h5" stroke="#1030C0" stroke-width="2" fill="none"/><path d="M3 11l2-4 9-6 2 2-9 6z" fill="#F8D838" stroke="#403000" stroke-width="0.8"/><path d="M13.5 1.2l2 2" stroke="#E06060" stroke-width="2"/><path d="M11 10v5h4" stroke="#20A020" stroke-width="0.9" fill="none"/><path d="M11 15l-2 1" stroke="#D02020" stroke-width="0.9"/></g>
<g transform="translate(67,81)" shape-rendering="auto"><path d="M1 9l9-7 6 6-9 7z" fill="#fff" stroke="#1030C0" stroke-width="1.8"/><path d="M7 15l9-7" stroke="#101010" stroke-width="2"/><path d="M3 8.5l6-4.5" stroke="#1030C0" stroke-width="1.2"/><path d="M2.5 6v3.5h3.5M9.5 2h-3.5" stroke="#1030C0" stroke-width="1.2" fill="none"/></g>
<g transform="translate(90,81)" shape-rendering="auto"><path d="M1 1l14 14" stroke="#1020A0" stroke-width="1.8"/></g>
<g transform="translate(113,81)" shape-rendering="auto"><rect x="1.5" y="2.5" width="13" height="11" fill="none" stroke="#1020A0" stroke-width="1.8"/><rect x="0" y="1" width="3" height="3" fill="#E01010"/><rect x="13" y="12" width="3" height="3" fill="#E01010"/><rect x="0.7" y="1.7" width="1.6" height="1.6" fill="#fff"/><rect x="13.7" y="12.7" width="1.6" height="1.6" fill="#fff"/></g>
<g transform="translate(137,81)" shape-rendering="auto"><circle cx="8" cy="8" r="6.5" fill="none" stroke="#1020A0" stroke-width="1.8"/><path d="M5.5 8h5M8 5.5v5" stroke="#303030"/></g>
<g transform="translate(160,81)" shape-rendering="auto"><circle cx="8" cy="8" r="6.5" fill="none" stroke="#1020A0" stroke-width="1.8"/><path d="M5.5 8h5M8 5.5v5" stroke="#303030"/><rect x="2.5" y="1.5" width="3" height="3" fill="#fff" stroke="#E01010"/><rect x="13" y="6.5" width="3" height="3" fill="#fff" stroke="#E01010"/><rect x="4.5" y="13" width="3" height="3" fill="#fff" stroke="#E01010"/></g>
<g transform="translate(182,81)" shape-rendering="auto"><path d="M3 4c2-3 8-4 11 1" stroke="#1020A0" stroke-width="1.8" fill="none"/><path d="M4 5l4 4" stroke="#202020"/><path d="M6.5 9h4M8.5 7v4" stroke="#303030"/><rect x="13.5" y="5.5" width="3" height="3" fill="#fff" stroke="#E01010"/><path d="M1 10h1M3 13h1M7 15h1M11 14h1M13 11h1" stroke="#202020" stroke-width="1.5"/></g>
<g transform="translate(205,81)" shape-rendering="auto"><path d="M0 1h9" stroke="#101010" stroke-width="1.6"/><path d="M9 1c4 0 6 3 6 6.5s-3 7.5-6 7.5" stroke="#1020A0" stroke-width="1.8" fill="none"/><rect x="7.5" y="0" width="3" height="3" fill="#fff" stroke="#E01010"/><path d="M5.5 9h5M8 6.5v5" stroke="#303030"/></g>
<g transform="translate(229,81)" shape-rendering="auto"><path d="M2 10c0-5 3-7 6-7s6 2 6 7" stroke="#1020A0" stroke-width="1.8" fill="none"/><rect x="0.5" y="9.5" width="3" height="3" fill="#fff" stroke="#E01010"/><rect x="12.5" y="9.5" width="3" height="3" fill="#fff" stroke="#E01010"/><rect x="6.5" y="1.5" width="3" height="3" fill="#fff" stroke="#E01010"/><path d="M6 11h4M8 9v4" stroke="#303030"/></g>
<g transform="translate(250,81)" shape-rendering="auto"><path d="M4 1.5h5c4 0 6 3 6 6v8" stroke="#A0A0A0" stroke-width="2" fill="none"/><path d="M5 9h4M7 7v4" stroke="#B0B0B0"/><path d="M0 10l4 4" stroke="#E0B0B0"/></g>
<g transform="translate(281,81)" shape-rendering="auto"><path d="M2.5 0v16" stroke="#101860" stroke-width="2.2" stroke-dasharray="5 1.5 1.5 1.5"/></g>
<g transform="translate(297,81)" shape-rendering="auto"><path d="M2 15c0-6 2-8 4-7 2 1 3 2 5 0s3-6 3-8" stroke="#1020A0" stroke-width="2.2" fill="none"/></g>
<g transform="translate(323,83)" shape-rendering="auto"><path d="M5 1v10M0 6h10M1.5 2.5l7 7M8.5 2.5l-7 7" stroke="#2040D0" stroke-width="1.3"/></g>
<g transform="translate(342,81)" shape-rendering="auto"><path d="M1.5 1.5h5l8 1.5v12l-5-1h-8z M1.5 7.5h7l6 0 M1.5 11.5h7M8 1.5v13" stroke="#1020A0" stroke-dasharray="1.5 1" fill="none"/></g>
<g transform="translate(366,81)" shape-rendering="auto"><path d="M0 14.5h14M6 1v13.5M6 9h5v5.5" stroke="#959595" stroke-width="2" fill="none"/></g>
<g transform="translate(389,81)" shape-rendering="auto"><path d="M0 14.5h16" stroke="#959595" stroke-width="2"/><circle cx="6" cy="9" r="3.5" fill="none" stroke="#959595" stroke-width="1.5"/><circle cx="10" cy="9" r="3.5" fill="none" stroke="#959595" stroke-width="1.5"/><path d="M7 1v4M11 1l2 3" stroke="#959595" stroke-width="1.3"/></g>
<g transform="translate(411,81)" shape-rendering="auto"><path d="M1 16V1h15" stroke="#959595" stroke-width="2" fill="none"/><circle cx="9" cy="9" r="5.2" fill="none" stroke="#959595" stroke-width="1.4"/><circle cx="9" cy="9" r="1.6" fill="#959595"/></g>
<path d="M436 93h5l-2.5 3z" fill="#808080"/>
<g transform="translate(447,81)" shape-rendering="auto"><path d="M8 0v2M3 14c1-2 1-4 2-8 1-3 5-3 6 0 1 4 1 6 2 8z M1 14.5h14" stroke="#959595" stroke-width="1.6" fill="none"/><path d="M8 4v8" stroke="#959595" stroke-width="1.5" stroke-dasharray="2 1.5"/><path d="M6 15.5h4" stroke="#959595" stroke-width="1.5"/></g>
<g transform="translate(470,81)" shape-rendering="auto"><path d="M1 4l3-3h11v11l-3 3h-11z M1 4h11v11 M12 4l3-3" stroke="#959595" stroke-width="1.6" fill="none"/><path d="M2.5 5v9" stroke="#C8C8C8" stroke-width="1.5"/></g>
<g transform="translate(493,81)" shape-rendering="auto"><path d="M1 2.5h13l-6 12" stroke="#959595" stroke-width="2.2" fill="none"/><path d="M2 6h8l-4 8" stroke="#959595" stroke-width="1.5" fill="none"/></g>
<g transform="translate(517,81)" shape-rendering="auto"><path d="M8 0v16M1 6h14M3 11h10M2 2l4 3M14 2l-4 3" stroke="#959595" stroke-width="1.8" fill="none"/></g>
<g transform="translate(540,81)" shape-rendering="auto"><path d="M2 2v13M14 1v14" stroke="#959595" stroke-width="1.6" stroke-dasharray="2.5 1"/><path d="M4 5h8M10 3l2 2-2 2M12 11h-8M6 9l-2 2 2 2" stroke="#959595" stroke-width="1.3" fill="none"/></g>
<g transform="translate(562,81)" shape-rendering="auto"><path d="M1 1h5v5h-5z" stroke="#959595" stroke-width="1.4" stroke-dasharray="1.5 1" fill="none"/><rect x="8.5" y="8.5" width="6" height="6" fill="none" stroke="#959595" stroke-width="2"/><path d="M3 8l4 4M7 9v3h-3" stroke="#959595" stroke-width="1.2" fill="none"/></g>
<g transform="translate(600,81)" shape-rendering="auto"><path d="M0.8 3l2.5-2.2h11v10.5l-2.5 2.5H0.8z" fill="#E8C020" stroke="#202000" stroke-width="1.2"/><rect x="2.5" y="4.5" width="9" height="9" fill="#F8E060" stroke="#303000"/><path d="M11.8 3.2l2.5-2.4" stroke="#202000"/><path d="M6 8l3-3 7 6-3 3z" fill="#30C040" stroke="#105010" stroke-width="0.8"/><rect x="10" y="10" width="6" height="6" fill="#40E050" stroke="#106010" stroke-width="0.8"/></g>
<g transform="translate(622,81)" shape-rendering="auto"><path d="M0.8 3l2.5-2.2h11v10.5l-2.5 2.5H0.8z" fill="#E8C020" stroke="#202000" stroke-width="1.2"/><rect x="2.5" y="4.5" width="9" height="9" fill="#F8E060" stroke="#303000"/><path d="M11.8 3.2l2.5-2.4" stroke="#202000"/><rect x="4.5" y="6.5" width="5" height="5" fill="#30A040" stroke="#103010"/><rect x="6" y="8" width="2" height="2" fill="#E8F0C0"/></g>
<g transform="translate(646,81)" shape-rendering="auto"><path d="M0.8 11.5c0-5 3-8 7.2-8s7.2 3 7.2 8c-1 1-2.8 1-3.8 0 0-2.5-1.5-4.2-3.4-4.2s-3.4 1.7-3.4 4.2c-1 1-2.8 1-3.8 0z" fill="#F0D040" stroke="#302800" stroke-linejoin="round"/><path d="M3 6.5c1.5-1.5 3-2 5-2" stroke="#FFF4B0" fill="none"/><path d="M8 0v16" stroke="#101010" stroke-dasharray="2 1.3"/></g>
<g transform="translate(669,81)" shape-rendering="auto"><path d="M1 6c0-4 3-5 7-5s7 1 7 5v7c0 2-3 3-7 3s-7-1-7-3z" fill="#F0D040" stroke="#303000"/><path d="M4.5 15v-6l3.5-3 3.5 3v6z" fill="#20B030" stroke="#104010"/><path d="M1 6c0 2 3 3 7 3s7-1 7-3" stroke="#303000" fill="none"/></g>
<g transform="translate(692,81)" shape-rendering="auto"><path d="M9 1.5c-5 0-8 3-8 6.5s3 6.5 8 6.5h5v-4h-5c-2 0-3-1-3-2.5s1-2.5 3-2.5h5v-4z" fill="#F0D040" stroke="#403000"/><ellipse cx="13.5" cy="3.5" rx="2" ry="2" fill="#F8E070" stroke="#403000"/><ellipse cx="13.5" cy="12.5" rx="2" ry="2" fill="#F8E070" stroke="#403000"/></g>
<path d="M720 84l3 3-3 3M724 84l3 3-3 3" stroke="#000" stroke-width="1.5" fill="none" shape-rendering="auto"/>
<g transform="translate(746,81)" shape-rendering="auto"><path d="M1 1l5 5v9l-5-5z" fill="#B0B8D0" stroke="#202030"/><path d="M9 0l6 6v8l-6-5z" fill="#C0C8E0" stroke="#202030"/><path d="M6 15l9-5-1 4-5 3z" fill="#F0A020" stroke="#302000"/></g>
<path d="M772 84l3 3-3 3M776 84l3 3-3 3" stroke="#000" stroke-width="1.5" fill="none" shape-rendering="auto"/>
<g transform="translate(7,25)" shape-rendering="auto"><path d="M0.6 3L4.7 2.6 5.7 1.6 11.4 1.7 11.8 6.4 15.5 9.6 15.3 14.4 10.5 16 0.6 7.4Z" fill="#F0D820" stroke="#000" stroke-width="1.4" stroke-linejoin="round"/><path d="M1.2 4.2L10.2 11.8V15.2L1.2 7z" fill="#FFF040"/><path d="M6.4 3h4.6v4.2l-4.4-1.2z" fill="#F8E848"/><path d="M11 12.2l3.8-2.2v4l-3.8 1.6z" fill="#E8C818"/><path d="M0.8 3.4L4.4 6.2M6 2.2V7.6M6 7.6L10.6 11.8M10.6 11.8L15.2 9.8M10.6 11.8V15.8" stroke="#000" stroke-width="1.1" fill="none"/></g>
<rect x="59" y="114" width="1" height="22" fill="#404040" />
<rect x="60" y="114" width="1" height="22" fill="#FFFFFF" />
<rect x="86" y="114" width="1" height="22" fill="#404040" />
<rect x="87" y="114" width="1" height="22" fill="#FFFFFF" />
<rect x="113" y="114" width="1" height="22" fill="#404040" />
<rect x="114" y="114" width="1" height="22" fill="#FFFFFF" />
<rect x="142" y="114" width="1" height="22" fill="#404040" />
<rect x="143" y="114" width="1" height="22" fill="#FFFFFF" />
<rect x="29" y="112" width="30" height="1" fill="#FFFFFF" />
<rect x="29" y="112" width="1" height="25" fill="#FFFFFF" />
<rect x="60" y="113" width="26" height="1" fill="#FFFFFF" />
<rect x="87" y="113" width="26" height="1" fill="#FFFFFF" />
<rect x="114" y="113" width="28" height="1" fill="#FFFFFF" />
<g transform="translate(35,116)" shape-rendering="auto"><path d="M0.6 3L4.7 2.6 5.7 1.6 11.4 1.7 11.8 6.4 15.5 9.6 15.3 14.4 10.5 16 0.6 7.4Z" fill="#F0D820" stroke="#000" stroke-width="1.4" stroke-linejoin="round"/><path d="M1.2 4.2L10.2 11.8V15.2L1.2 7z" fill="#FFF040"/><path d="M6.4 3h4.6v4.2l-4.4-1.2z" fill="#F8E848"/><path d="M11 12.2l3.8-2.2v4l-3.8 1.6z" fill="#E8C818"/><path d="M0.8 3.4L4.4 6.2M6 2.2V7.6M6 7.6L10.6 11.8M10.6 11.8L15.2 9.8M10.6 11.8V15.8" stroke="#000" stroke-width="1.1" fill="none"/></g>
<g transform="translate(62,116)" shape-rendering="auto"><path d="M1.5 5.5h11v13h-11z" fill="#fff" stroke="#101010" stroke-width="1.1"/><path d="M3 9.2h8M3 11.6h8M3 14h8M3 16.2h8" stroke="#70B0F0" stroke-width="1"/><path d="M5 6l4-3.5 6 .3 1 3-4 1.2-3 2z" fill="#F0C080" stroke="#805020" stroke-width="0.7"/><path d="M6 5l2 2M7.5 4l2 2M9 3.2l2 2" stroke="#C09060" stroke-width="0.6"/></g>
<g transform="translate(92,116)" shape-rendering="auto"><path d="M1.5 1v16M1.5 5h3M1.5 14h5" stroke="#707070" stroke-width="1.2" fill="none"/><path d="M0.5 1v16" stroke="#C0C0C0"/><rect x="4.5" y="1.5" width="7" height="7" rx="2" fill="#F8E040" stroke="#202000" stroke-width="1.1"/><rect x="8" y="10.5" width="7" height="7" rx="2" fill="#F8E040" stroke="#202000" stroke-width="1.1"/></g>
<g transform="translate(119,116)" shape-rendering="auto"><rect x="0.5" y="0.5" width="13" height="13" fill="#40A0F0" stroke="#101010"/><path d="M1 13l5-7 4 4 3-3v6z" fill="#20A030"/><path d="M7 9l4-4 5 5-4 5z" fill="#F0D020" stroke="#303000" stroke-width="0.7"/><path d="M9 9l2-2 2 2-2 2z" fill="#E02020"/><path d="M11 11l2-2 2 2-2 2z" fill="#2040E0"/><circle cx="10" cy="3.5" r="2" fill="#F0B040"/></g>
<g transform="translate(9,136)" shape-rendering="auto"><path d="M1 8l7-7 7 7" stroke="#202020" stroke-width="1.3" fill="#F8F0C0"/><path d="M3 7v8h10v-8" fill="#F8F0B0" stroke="#202020" stroke-width="1.2"/><rect x="6.5" y="9" width="3" height="6" fill="#E0A020" stroke="#202020" stroke-width="0.8"/><rect x="11" y="1" width="2.5" height="4" fill="#D02020"/></g>
<g transform="translate(9,162)" shape-rendering="auto"><path d="M0.5 9l2-1.5h3l-2 1.5z" fill="#80E080" stroke="#101010" stroke-width="0.7"/><path d="M0.5 9h3v6.5h-3z" fill="#20A020" stroke="#101010" stroke-width="0.8"/><path d="M3.5 9l2-1.5v6.5l-2 1.5z" fill="#106010" stroke="#101010" stroke-width="0.7"/><path d="M5.5 6l2-1.5h3l-2 1.5z" fill="#FFF080" stroke="#101010" stroke-width="0.7"/><path d="M5.5 6h3v9.5h-3z" fill="#F0D020" stroke="#101010" stroke-width="0.8"/><path d="M8.5 6l2-1.5v9.5l-2 1.5z" fill="#907000" stroke="#101010" stroke-width="0.7"/><path d="M10.5 2l2-1.5h3l-2 1.5z" fill="#C0D8FF" stroke="#101010" stroke-width="0.7"/><path d="M10.5 2h3v13.5h-3z" fill="#4080E0" stroke="#101010" stroke-width="0.8"/><path d="M13.5 2l2-1.5v13.5l-2 1.5z" fill="#204080" stroke="#101010" stroke-width="0.7"/><path d="M1 8l5-3 5-3.5" stroke="#fff" stroke-width="1.2" stroke-dasharray="1.5 1"/></g>
<g transform="translate(9,190)" shape-rendering="auto"><path d="M1.5 3.5h5l1.5 1.5h6.5v9h-13z" fill="#F8E090" stroke="#C09030"/><circle cx="8" cy="9" r="3.5" fill="#C0E0F8" stroke="#C09030" stroke-width="1.5"/><path d="M10.5 11.5l4 4" stroke="#C09030" stroke-width="2"/></g>
<g transform="translate(9,217)" shape-rendering="auto"><rect x="0.5" y="0.5" width="15" height="12" fill="#E8F0F8" stroke="#A0B0C0"/><path d="M2 2l4 4-4 4zM10 2l-4 4 4 4z" fill="#F0D030"/><rect x="9" y="2" width="5" height="4" fill="#B0D0F0"/><path d="M1 14.5h7M6 13l2 1.5-2 1.5" stroke="#2040A0" stroke-width="1.2" fill="none"/></g>
<g transform="translate(9,244)" shape-rendering="auto"><rect x="0.5" y="0.5" width="15" height="15" fill="#3080D0" stroke="#101010"/><path d="M1 15l5-7 4 4 5-5v8z" fill="#20A030"/><circle cx="11" cy="4" r="2.5" fill="#F0D020"/></g>
<rect x="214" y="115" width="1" height="1" fill="#D4D0C8" />
</svg>
</body></html>
